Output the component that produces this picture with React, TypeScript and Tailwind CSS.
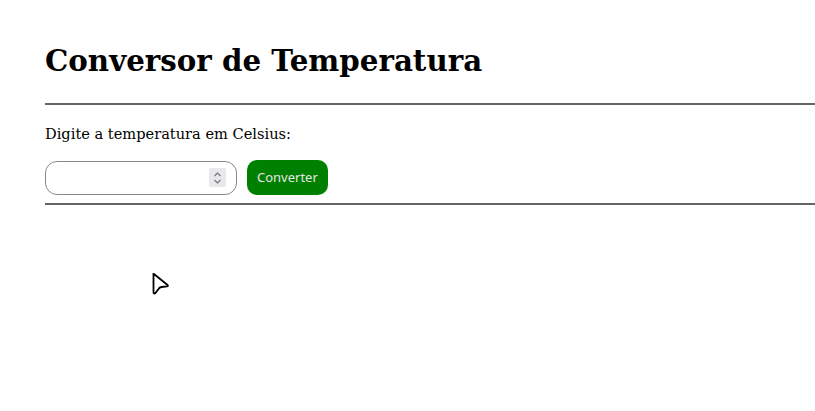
import React from "react";

const serif = { fontFamily: '"DejaVu Serif", "Liberation Serif", serif' };

export default function App() {
  return (
    <div className="relative min-h-[411px] bg-white pl-[45px] pt-[41px] text-black" style={serif}>
      <h1 className="text-[29.3px] font-bold leading-[40px]">Conversor de Temperatura</h1>
      <hr className="mt-[22px] border-0 border-t-2 border-[#666]" />
      <p className="mt-[18px] text-[14.6px] leading-[22px]">Digite a temperatura em Celsius:</p>
      <div className="mt-[15px] flex items-center gap-[10px]">
        <div className="flex h-[34px] w-[192px] items-center justify-end rounded-[12px] border border-[#888] pr-[10px]">
          <div className="flex h-[19px] w-[17px] flex-col items-center justify-center rounded-[2px] bg-[#e8e8ec]">
            <svg width="9" height="14" viewBox="0 0 9 14" fill="none" stroke="#777" strokeWidth="1.2">
              <path d="M1.5 5 L4.5 2 L7.5 5" />
              <path d="M1.5 9 L4.5 12 L7.5 9" />
            </svg>
          </div>
        </div>
        <button
          className="h-[35px] rounded-[10px] bg-[#008000] px-[10px] text-[13px] text-[#e6e6e6]"
          style={{ fontFamily: '"Noto Sans", "Open Sans", sans-serif' }}
        >
          Converter
        </button>
      </div>
      <hr className="mt-[8px] border-0 border-t-2 border-[#666]" />
      <svg className="absolute left-[150px] top-[271px]" width="22" height="26" viewBox="0 0 22 26" fill="white" stroke="black" strokeWidth="1.8" strokeLinejoin="round">
        <path d="M3.5 3.5 Q3 2.5 4 3 L17.5 14 Q18.5 15 17 15.3 L11.5 16 Q9.5 16.4 8.5 18 L5.5 22 Q3.5 23.5 3.5 21 Z" />
      </svg>
    </div>
  );
}
